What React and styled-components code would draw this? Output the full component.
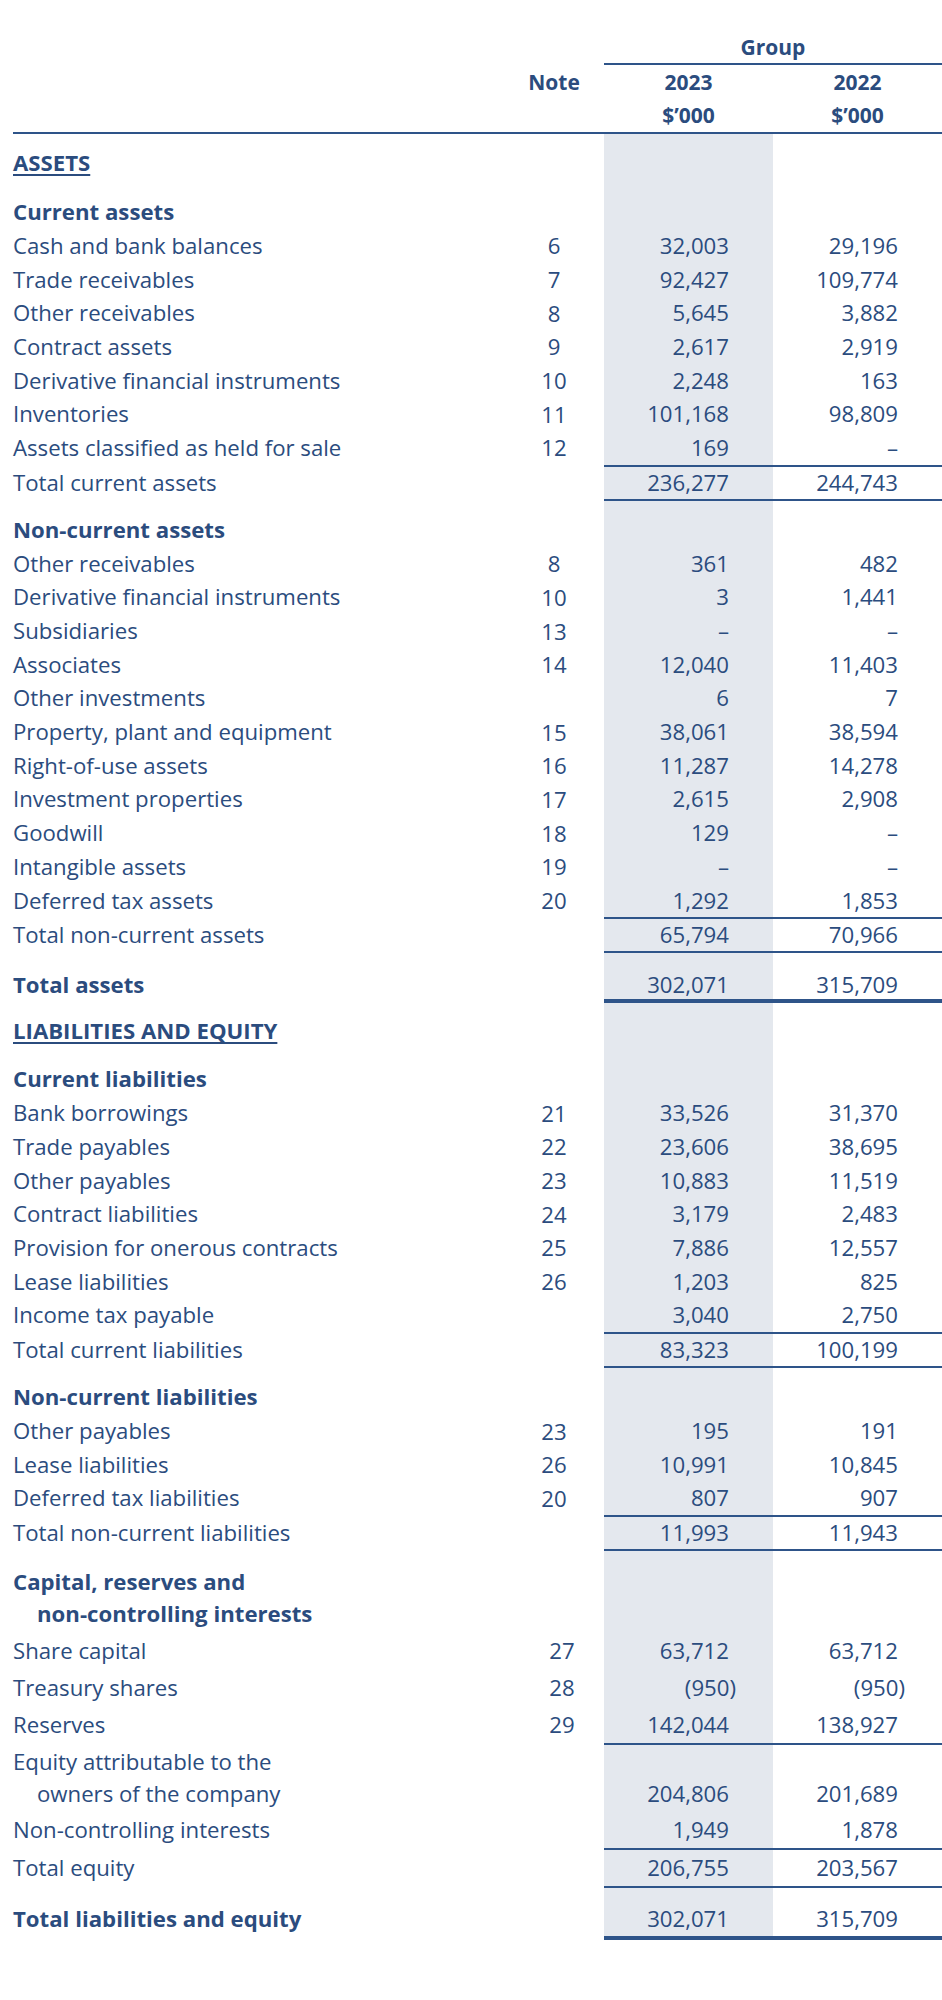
import React from "react";
import styled, { createGlobalStyle } from "styled-components";

const INK = "#2b4c7e";
const RULE = "#2e5489";
const SHADE = "#e4e8ee";

const GlobalStyle = createGlobalStyle`
  html, body {
    margin: 0;
    padding: 0;
    background: #ffffff;
  }
  body {
    font-family: "Open Sans", "Noto Sans", sans-serif;
    font-size: 21px;
    color: ${INK};
  }
`;

const Page = styled.div`
  width: 929px;
  margin-left: 13px;
  padding-top: 31px;
`;

const HeadGrid = styled.div`
  display: grid;
  grid-template-columns: 1fr 100px 169px 169px;
  height: ${({ $h }) => $h}px;
  font-weight: 700;
  line-height: ${({ $h }) => $h}px;
  text-align: center;
`;

const GroupTitle = styled.div`
  grid-column: 3 / span 2;
`;

const Row = styled.div`
  display: grid;
  grid-template-columns: 1fr 100px 169px 169px;
  height: ${({ $h }) => $h}px;
  font-size: 22.2px;
`;

const Cell = styled.div`
  display: flex;
  align-items: ${({ $end }) => ($end ? "flex-end" : "center")};
  padding-bottom: ${({ $end }) => ($end ? 1 : 0)}px;
`;

const Label = styled(Cell)`
  flex-direction: column;
  align-items: flex-start;
  justify-content: center;
  font-weight: ${({ $bold }) => ($bold ? 700 : 400)};
  line-height: 32px;
  white-space: nowrap;
`;

const Under = styled.span`
  text-decoration: underline;
  text-decoration-thickness: 2px;
  text-underline-offset: 3px;
`;

const Indent = styled.span`
  padding-left: 24px;
`;

const Note = styled(Cell)`
  justify-content: center;
  padding-left: ${({ $shift }) => ($shift ? 16 : 0)}px;
`;

const Value = styled(Cell)`
  justify-content: flex-end;
  padding-right: ${({ $neg }) => ($neg ? 37 : 44)}px;
  background: ${({ $shade }) => ($shade ? SHADE : "transparent")};
  line-height: 32px;
`;

const Rule = styled.div`
  display: grid;
  grid-template-columns: 1fr 100px 338px;
  height: ${({ $h }) => $h}px;
`;

const RuleBar = styled.div`
  grid-column: 3;
  background: ${RULE};
`;

const FullRule = styled.div`
  height: 2px;
  background: ${RULE};
`;

const r = (label, note, a, b, extra = {}) => ({ label, note, a, b, h: 33.7, ...extra });

const rows = [
  { t: "gap", h: 12 },
  { label: "ASSETS", bold: true, under: true, h: 34 },
  { t: "gap", h: 15 },
  { label: "Current assets", bold: true, h: 34 },
  r("Cash and bank balances", "6", "32,003", "29,196"),
  r("Trade receivables", "7", "92,427", "109,774"),
  r("Other receivables", "8", "5,645", "3,882"),
  r("Contract assets", "9", "2,617", "2,919"),
  r("Derivative financial instruments", "10", "2,248", "163"),
  r("Inventories", "11", "101,168", "98,809"),
  r("Assets classified as held for sale", "12", "169", "–"),
  { t: "rule", h: 2 },
  r("Total current assets", "", "236,277", "244,743", { h: 32 }),
  { t: "rule", h: 2 },
  { t: "gap", h: 12 },
  { label: "Non-current assets", bold: true, h: 34 },
  r("Other receivables", "8", "361", "482"),
  r("Derivative financial instruments", "10", "3", "1,441"),
  r("Subsidiaries", "13", "–", "–"),
  r("Associates", "14", "12,040", "11,403"),
  r("Other investments", "", "6", "7"),
  r("Property, plant and equipment", "15", "38,061", "38,594"),
  r("Right-of-use assets", "16", "11,287", "14,278"),
  r("Investment properties", "17", "2,615", "2,908"),
  r("Goodwill", "18", "129", "–"),
  r("Intangible assets", "19", "–", "–"),
  r("Deferred tax assets", "20", "1,292", "1,853"),
  { t: "rule", h: 2 },
  r("Total non-current assets", "", "65,794", "70,966", { h: 32 }),
  { t: "rule", h: 2 },
  { t: "gap", h: 16 },
  r("Total assets", "", "302,071", "315,709", { h: 30, bold: true }),
  { t: "rule", h: 4 },
  { t: "gap", h: 11 },
  { label: "LIABILITIES AND EQUITY", bold: true, under: true, h: 34 },
  { t: "gap", h: 14 },
  { label: "Current liabilities", bold: true, h: 34 },
  r("Bank borrowings", "21", "33,526", "31,370"),
  r("Trade payables", "22", "23,606", "38,695"),
  r("Other payables", "23", "10,883", "11,519"),
  r("Contract liabilities", "24", "3,179", "2,483"),
  r("Provision for onerous contracts", "25", "7,886", "12,557"),
  r("Lease liabilities", "26", "1,203", "825"),
  r("Income tax payable", "", "3,040", "2,750"),
  { t: "rule", h: 2 },
  r("Total current liabilities", "", "83,323", "100,199", { h: 32 }),
  { t: "rule", h: 2 },
  { t: "gap", h: 12 },
  { label: "Non-current liabilities", bold: true, h: 34 },
  r("Other payables", "23", "195", "191"),
  r("Lease liabilities", "26", "10,991", "10,845"),
  r("Deferred tax liabilities", "20", "807", "907"),
  { t: "rule", h: 2 },
  r("Total non-current liabilities", "", "11,993", "11,943", { h: 32 }),
  { t: "rule", h: 2 },
  { t: "gap", h: 15 },
  { label: ["Capital, reserves and", "non-controlling interests"], bold: true, h: 64 },
  { t: "gap", h: 2 },
  r("Share capital", "27", "63,712", "63,712", { h: 37, shift: true }),
  r("Treasury shares", "28", "(950)", "(950)", { h: 37, shift: true, neg: true }),
  r("Reserves", "29", "142,044", "138,927", { h: 37, shift: true }),
  { t: "rule", h: 2 },
  r(["Equity attributable to the", "owners of the company"], "", "204,806", "201,689", { h: 66 }),
  r("Non-controlling interests", "", "1,949", "1,878", { h: 37 }),
  { t: "rule", h: 2 },
  r("Total equity", "", "206,755", "203,567", { h: 36 }),
  { t: "rule", h: 2 },
  { t: "gap", h: 14 },
  r("Total liabilities and equity", "", "302,071", "315,709", { h: 34, bold: true }),
  { t: "rule", h: 4 },
];

const LabelText = ({ label, under }) => {
  if (Array.isArray(label)) {
    return (
      <>
        <span>{label[0]}</span>
        <Indent>{label[1]}</Indent>
      </>
    );
  }
  return under ? <Under>{label}</Under> : <span>{label}</span>;
};

const App = () => {
  return (
    <>
      <GlobalStyle />
      <Page>
        <HeadGrid $h={32}>
          <GroupTitle>Group</GroupTitle>
        </HeadGrid>
        <Rule $h={2}>
          <RuleBar />
        </Rule>
        <HeadGrid $h={34}>
          <div />
          <div>Note</div>
          <div>2023</div>
          <div>2022</div>
        </HeadGrid>
        <HeadGrid $h={33}>
          <div />
          <div />
          <div>$’000</div>
          <div>$’000</div>
        </HeadGrid>
        <FullRule />

        {rows.map((row, i) => {
          if (row.t === "rule") {
            return (
              <Rule key={i} $h={row.h}>
                <RuleBar />
              </Rule>
            );
          }
          if (row.t === "gap") {
            return (
              <Row key={i} $h={row.h}>
                <div />
                <div />
                <Value $shade />
                <div />
              </Row>
            );
          }
          const multi = Array.isArray(row.label);
          return (
            <Row key={i} $h={row.h}>
              <Label $bold={row.bold}>
                <LabelText label={row.label} under={row.under} />
              </Label>
              <Note $shift={row.shift} $end={multi}>{row.note}</Note>
              <Value $shade $neg={row.neg} $end={multi}>{row.a}</Value>
              <Value $neg={row.neg} $end={multi}>{row.b}</Value>
            </Row>
          );
        })}
      </Page>
    </>
  );
};

export default App;
